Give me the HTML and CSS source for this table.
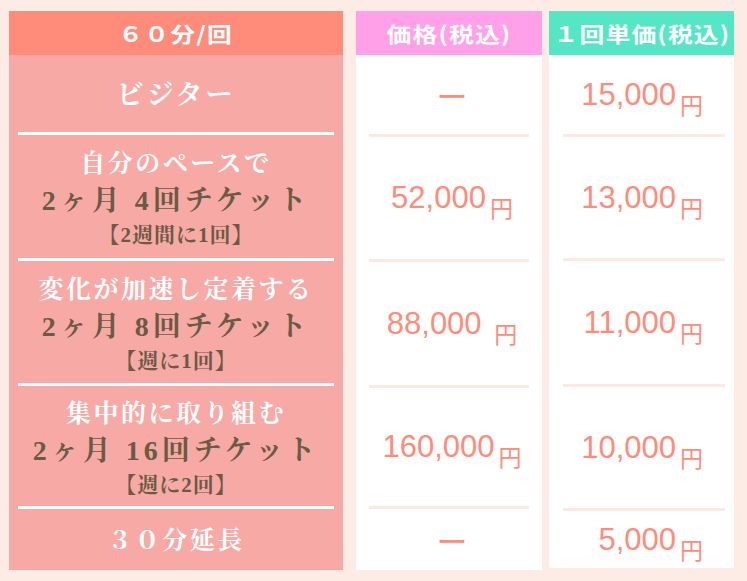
FILE: index.html
```html
<!DOCTYPE html>
<html lang="ja">
<head>
<meta charset="utf-8">
<title>料金表</title>
<link rel="stylesheet" href="styles.css">
</head>
<body>
<div class="board">
  <div class="col col-plan">
    <div class="hd hd-plan"><span>６０分/回</span></div>
    <div class="plan"><p class="title title-lg">ビジター</p></div>
    <div class="rule"></div>
    <div class="plan">
      <p class="title">自分のペースで</p>
      <p class="main">2ヶ月 4回チケット</p>
      <p class="sub">【2週間に1回】</p>
    </div>
    <div class="rule"></div>
    <div class="plan">
      <p class="title">変化が加速し定着する</p>
      <p class="main">2ヶ月 8回チケット</p>
      <p class="sub">【週に1回】</p>
    </div>
    <div class="rule"></div>
    <div class="plan">
      <p class="title">集中的に取り組む</p>
      <p class="main">2ヶ月 16回チケット</p>
      <p class="sub">【週に2回】</p>
    </div>
    <div class="rule"></div>
    <div class="plan"><p class="title">３０分延長</p></div>
  </div>

  <div class="col col-price">
    <div class="hd hd-price"><span>価格(税込)</span></div>
    <div class="val"><span class="dash">ー</span></div>
    <div class="rule"></div>
    <div class="val"><p class="price">52,000<span class="yen">円</span></p></div>
    <div class="rule"></div>
    <div class="val"><p class="price">88,000 <span class="yen">円</span></p></div>
    <div class="rule"></div>
    <div class="val"><p class="price">160,000<span class="yen">円</span></p></div>
    <div class="rule"></div>
    <div class="val"><span class="dash">ー</span></div>
  </div>

  <div class="col col-unit">
    <div class="hd hd-unit"><span>１回単価(税込)</span></div>
    <div class="val"><p class="price">15,000<span class="yen">円</span></p></div>
    <div class="rule"></div>
    <div class="val"><p class="price">13,000<span class="yen">円</span></p></div>
    <div class="rule"></div>
    <div class="val"><p class="price">11,000<span class="yen">円</span></p></div>
    <div class="rule"></div>
    <div class="val"><p class="price">10,000<span class="yen">円</span></p></div>
    <div class="rule"></div>
    <div class="val"><p class="price">5,000<span class="yen">円</span></p></div>
  </div>
</div>
</body>
</html>
```

FILE: styles.css
```css
html, body {
  margin: 0;
  padding: 0;
}
body {
  background: #fdece6;
  width: 747px;
  height: 581px;
  overflow: hidden;
}
.board {
  display: flex;
  align-items: flex-start;
  padding: 11px 0 0 9px;
}
.col {
  display: grid;
}
.col-plan {
  width: 334px;
  background: #f7a9a6;
  grid-template-rows: 44px 77px 3px 123px 3px 122px 3px 120px 3px 61px;
}
.col-price {
  width: 186px;
  margin-left: 13px;
  background: #fff;
  grid-template-rows: 44px 79px 3px 122px 3px 123px 3px 118px 3px 61px;
}
.col-unit {
  width: 185px;
  margin-left: 7px;
  background: #fff;
  grid-template-rows: 44px 79px 3px 121px 3px 123px 3px 121px 3px 57px;
}

/* headers */
.hd {
  display: flex;
  align-items: center;
  justify-content: center;
  color: #fff;
  font-family: "Noto Sans CJK JP", sans-serif;
  font-weight: 700;
  font-size: 21px;
  letter-spacing: 1px;
  white-space: nowrap;
}
.hd span {
  display: inline-block;
  transform: scaleX(1.18);
  line-height: 1;
}
.hd-plan { background: #ff8b7b; }
.hd-price { background: #ffa0e9; }
.hd-unit { background: #55e6c6; }

/* dividers */
.rule { height: 3px; }
.col-plan .rule { background: #fff; margin: 0 9px; }
.col-price .rule { background: #fde9e2; margin: 0 13px; }
.col-unit .rule { background: #fde9e2; margin: 0 9px 0 14px; }

/* plan column */
.plan {
  display: flex;
  flex-direction: column;
  align-items: center;
  justify-content: center;
  padding-top: 3px;
  font-family: "Liberation Serif", "Noto Serif CJK JP", "Noto Sans CJK JP", serif;
  font-weight: 700;
  text-align: center;
  white-space: nowrap;
}
.plan p { margin: 0; }
.title {
  color: #fff;
  font-size: 25px;
  line-height: 36px;
  letter-spacing: 2.5px;
}
.title-lg {
  font-size: 27px;
  letter-spacing: 3px;
}
.main {
  color: #6b5a44;
  font-size: 28px;
  line-height: 38px;
  letter-spacing: 4px;
}
.sub {
  color: #6b5a44;
  font-size: 21px;
  line-height: 30px;
  letter-spacing: 1px;
}

/* price columns */
.val {
  display: flex;
  align-items: center;
  color: #ff8b79;
  white-space: nowrap;
}
.col-price .val {
  justify-content: center;
  padding-left: 6px;
}
.col-unit .val {
  justify-content: flex-end;
  padding-right: 31px;
}
.price {
  margin: 0;
  font-family: "Liberation Sans", Arial, sans-serif;
  font-size: 31px;
  line-height: 30px;
}
.yen {
  font-family: "Noto Sans CJK JP", sans-serif;
  font-size: 23px;
  font-weight: 400;
  line-height: 0;
  vertical-align: -9px;
  margin-left: 4px;
}
.dash {
  font-family: "Noto Sans CJK JP", sans-serif;
  font-size: 31px;
  line-height: 31px;
}
```
